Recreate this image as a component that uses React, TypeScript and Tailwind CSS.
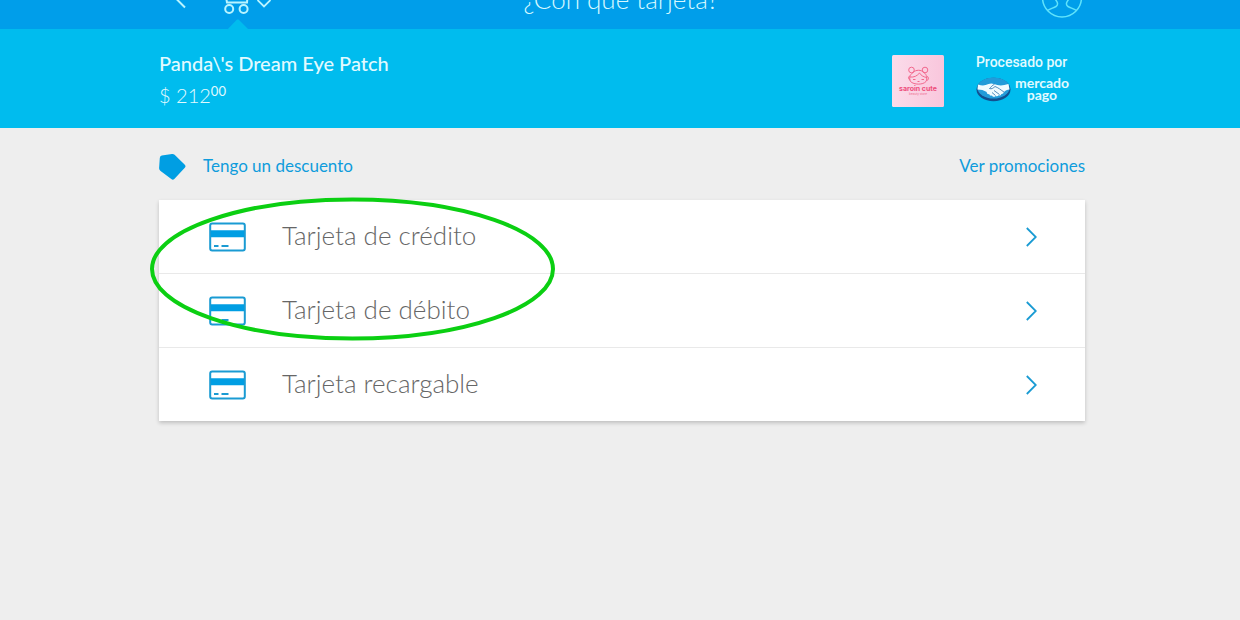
import type { ReactNode } from 'react';

const methods = ['Tarjeta de crédito', 'Tarjeta de débito', 'Tarjeta recargable'];

function Container({ children, className = '' }: { children: ReactNode; className?: string }) {
    return (
        <div className="w-full pl-1">
            <div className={`mx-auto w-full max-w-[926px] ${className}`}>{children}</div>
        </div>
    );
}

function BackIcon() {
    return (
        <svg width="12" height="20" viewBox="0 0 12 20" fill="none" stroke="currentColor" strokeWidth="2">
            <path d="M10 1.5 1.5 10l8.500 8.500" />
        </svg>
    );
}

function CartIcon() {
    return (
        <svg width="30" height="30" viewBox="0 0 30 30" fill="none" stroke="currentColor" strokeWidth="2">
            <path d="M0 2h5l3 16.500h20L29 6H6" />
            <circle cx="10.200" cy="25" r="4" />
            <circle cx="24.600" cy="25" r="4" />
        </svg>
    );
}

function DownIcon() {
    return (
        <svg width="14" height="9" viewBox="0 0 14 9" fill="none" stroke="currentColor" strokeWidth="1.800">
            <path d="m.5 1 6.500 6.500L13.500 1" />
        </svg>
    );
}

function UserIcon() {
    return (
        <svg width="42" height="42" viewBox="0 0 42 42" fill="none" stroke="currentColor" strokeWidth="1.500">
            <circle cx="21" cy="19.500" r="19.500" />
            <path d="M6.500 32.500c3-2 6-2.500 8.500-4 2-1.200 2-3.500.5-5.500-5-7-3-15 5.500-15s10.500 8 5.500 15c-1.500 2-1.500 4.300.5 5.500 2.500 1.500 5.500 2 8.500 4" />
        </svg>
    );
}

function TagIcon() {
    return (
        <svg width="28" height="28" viewBox="0 0 28 28" fill="#009ee3">
            <path d="M2.800 3.500 13 2q1.500-.2 2.600.8l10.200 10q1.400 1.500 0 3l-10.500 11.200q-1.500 1.400-3 0L1.600 19Q0 17.500.1 16L.8 6q.2-2.200 2-2.500Z" />
        </svg>
    );
}

function CardIcon() {
    return (
        <svg width="37" height="30" viewBox="0 0 37 30" fill="none" stroke="#1a9bd3" strokeWidth="2">
            <rect x="1.200" y="1.500" width="34.600" height="27" rx="2" />
            <path d="M2 11.800h33" stroke="#009ee3" strokeWidth="7" />
            <path d="M5 24h4.500M12.500 24h7" />
        </svg>
    );
}

function ChevronIcon() {
    return (
        <svg width="12" height="20" viewBox="0 0 12 20" fill="none" stroke="#1a9bd3" strokeWidth="1.800">
            <path d="m1.800 1 9 9-9 9" />
        </svg>
    );
}

function StoreLogo() {
    return (
        <svg width="52" height="52" viewBox="0 0 52 52" role="img" aria-label="Tienda">
            <defs>
                <linearGradient id="store" x1="0" y1="0" x2="1" y2="0">
                    <stop offset="0" stopColor="#fbdcea" />
                    <stop offset="1" stopColor="#f9c6dc" />
                </linearGradient>
            </defs>
            <rect width="52" height="52" rx="1.500" fill="url(#store)" />
            <g fill="none" stroke="#f2688d" strokeWidth="1">
                <circle cx="19.500" cy="15" r="2.800" />
                <circle cx="33" cy="15" r="2.800" />
                <path d="M21 17.500c3-3 8-3 11 0 2.800 2 3.500 6 2 9-3 3.500-12 3.500-15.500 0-1.800-3-.6-7 2.500-9Z" />
                <path d="M18 22c4 .5 7-1 9.500-4 1.500 2.500 4 4 7.500 4.500M18 21c-2 0-2 4 .5 4M35 21.500c2 0 2 4-.5 4" />
                <path d="M21 24.500h2.500M29.500 24.500H32M25.500 26.500h2" />
            </g>
            <text x="26" y="36" textAnchor="middle" fontSize="7" fontWeight="700" fill="#ee4f7c" className="font-['Inter',sans-serif]">
                saroin cute
            </text>
            <text x="26" y="40" textAnchor="middle" fontSize="3" fill="#ee6b90" className="font-['Inter',sans-serif]">
                beauty store
            </text>
        </svg>
    );
}

function HandshakeLogo() {
    return (
        <svg width="35" height="26" viewBox="0 0 35 26">
            <ellipse cx="17.500" cy="13.500" rx="17" ry="11.800" fill="#12508f" />
            <ellipse cx="17.500" cy="12" rx="16" ry="10.500" fill="#239bd9" />
            <path
                d="M2 8.500c4 1.600 7 1.300 10.500-.4 2-.9 4-.6 5.500 0 4 1.500 8 2 14.500 0l1 5.500c-2.500.4-4 1-5.500 2.500-.6 1.600-1.600 2-2.600 1.800-.5 1.300-1.600 1.800-2.700 1.400-.8 1.200-2 1.300-3 .6-1.200 1.300-3 1.200-3.700-.4-1.500.5-2.500-.2-2.800-1.400-1.600.3-2.600-.6-2.500-2C8 14 5 13.400 1.500 13.400Z"
                fill="#f1fbff"
            />
            <path d="M18.500 8.300c-2.500 1-3.500 3-5 4.200 2 1 4-.6 5.500-2 3 1 6 3.500 9 5.600M18 14.500l5.500 4M16 16.500l3.500 3" fill="none" stroke="#2c6ea8" strokeWidth=".8" />
        </svg>
    );
}

export default function App() {
    return (
        <div className="min-h-screen bg-[#eeeeee] font-['Lato',sans-serif]">
            <header className="flex h-[29px] items-end overflow-hidden bg-[#009eea] text-[#b9f4ff]">
                <Container className="flex h-[60px] items-center">
                    <div className="flex flex-1 items-center">
                        <button type="button" aria-label="Volver" className="ml-4">
                            <BackIcon />
                        </button>
                        <button type="button" aria-label="Carrito" className="ml-8 flex items-center gap-2">
                            <CartIcon />
                            <span className="pt-2">
                                <DownIcon />
                            </span>
                        </button>
                    </div>
                    <h1 className="text-[26px] leading-8 font-light text-[#d5f8ff]">¿Con qué tarjeta?</h1>
                    <div className="flex flex-1 justify-end pr-0.5">
                        <button type="button" aria-label="Mi cuenta" className="text-[#5fe3fb]">
                            <UserIcon />
                        </button>
                    </div>
                </Container>
            </header>

            <section className="bg-[#00bcee] text-[#e2faff]">
                <Container className="relative flex items-center justify-between pt-[18px] pr-4 pb-[17px]">
                    <svg className="absolute -top-[10px] left-[67px]" width="24" height="12" viewBox="0 0 24 12" fill="#00bcee">
                        <path d="M0 12 11 .5h1.500L24 12Z" />
                    </svg>
                    <div>
                        <h2 className="text-[20px] leading-8 font-medium">Panda\'s Dream Eye Patch</h2>
                        <p className="flex text-[20px] leading-8 font-light">
                            $ 212<span className="text-[13px] leading-6 font-normal">00</span>
                        </p>
                    </div>
                    <div className="flex items-center gap-8 pt-1">
                        <StoreLogo />
                        <div className="pb-2">
                            <p className="font-['Roboto',sans-serif] text-[14px] leading-5 font-medium">Procesado por</p>
                            <div className="mt-1 flex items-center gap-1">
                                <HandshakeLogo />
                                <p className="text-center text-[14px] leading-3 font-bold">
                                    mercado
                                    <br />
                                    pago
                                </p>
                            </div>
                        </div>
                    </div>
                </Container>
            </section>

            <main>
                <Container>
                    <div className="flex h-[72px] items-center justify-between pt-1 text-[17px] leading-6 text-[#0f9cdc]">
                        <a href="#descuento" className="flex items-center gap-4">
                            <TagIcon />
                            Tengo un descuento
                        </a>
                        <a href="#promociones">Ver promociones</a>
                    </div>
                    <div className="relative">
                        <ul className="divide-y divide-[#e9e9e9] bg-white shadow-[0_2px_4px_rgba(0,0,0,0.2)]">
                            {methods.map((name) => (
                                <li key={name}>
                                    <button type="button" className="flex h-[73px] w-full items-center pt-px pr-12 pl-[50px] text-left">
                                        <CardIcon />
                                        <span className="ml-9 flex-1 pb-1 text-[26px] leading-8 font-light text-[#666666]">{name}</span>
                                        <ChevronIcon />
                                    </button>
                                </li>
                            ))}
                        </ul>
                        <svg
                            className="pointer-events-none absolute -top-[3px] -left-[9px]"
                            width="406"
                            height="144"
                            viewBox="0 0 406 144"
                            fill="none"
                        >
                            <ellipse cx="202.500" cy="72" rx="200.500" ry="69.500" stroke="#0bcf12" strokeWidth="4" />
                        </svg>
                    </div>
                </Container>
            </main>
        </div>
    );
}
